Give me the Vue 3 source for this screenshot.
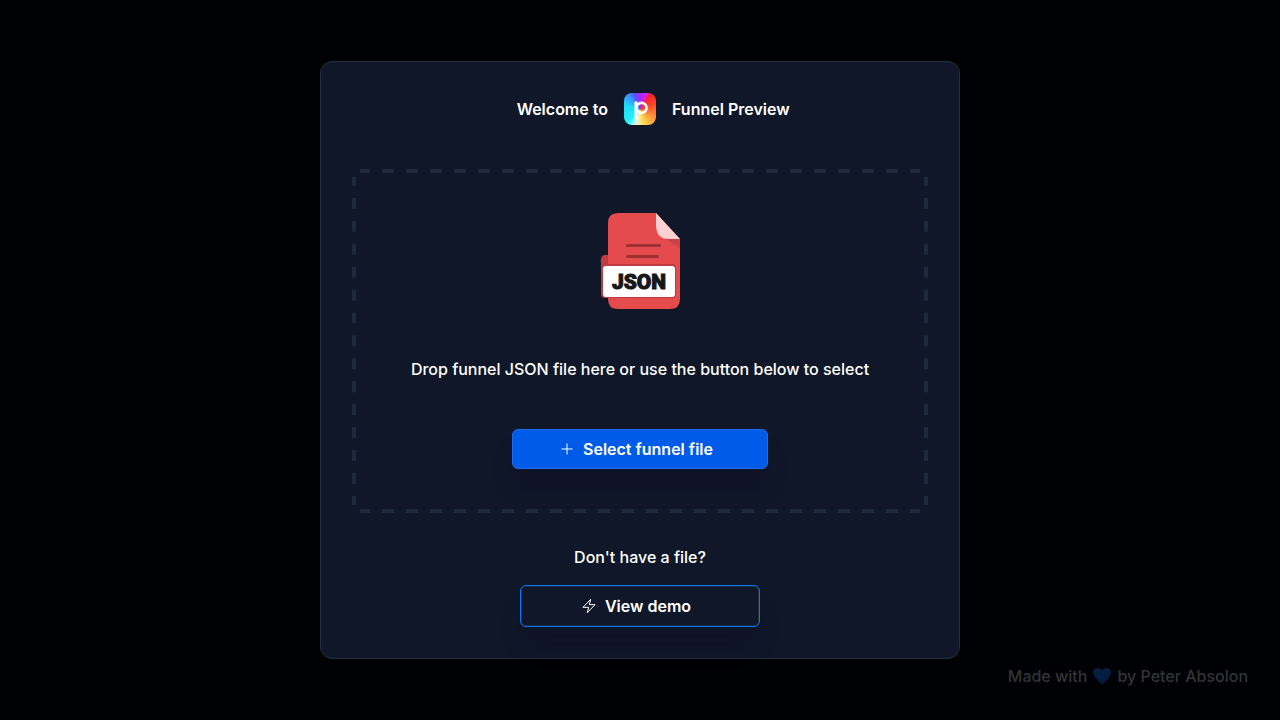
<script setup>
const headingLeft = 'Welcome to'
const headingRight = 'Funnel Preview'
</script>

<template>
  <div class="page">
    <main class="card">
      <header class="heading">
        <span class="left">{{ headingLeft }}</span>
        <span class="logo">
          <svg viewBox="0 0 32 32" aria-hidden="true">
            <path d="M12 8.500v18" fill="none" stroke="#fff" stroke-width="3" />
            <circle cx="17.500" cy="14.800" r="5" fill="none" stroke="#fff" stroke-width="2.800" />
          </svg>
        </span>
        <span>{{ headingRight }}</span>
      </header>

      <section class="drop">
        <svg class="file" viewBox="4 0 96 96" aria-hidden="true">
          <path d="M17 42h9v43h-5q-8 0-8-8V50q-1-8 4-8Z" fill="#bd3c3f" />
          <path d="M30 0h38l24 26v60q0 10-10 10H30q-10 0-10-10V10Q20 0 30 0Z" fill="#e54b4d" />
          <path d="M78 26h14v9Z" fill="#cb4144" />
          <path d="M68 0l24 26H81Q68 26 68 12Z" fill="#ffcfd2" />
          <path d="M39.500 32.500h32M39.500 43.500h30" stroke="#9c3033" stroke-width="3" stroke-linecap="round" />
          <rect x="13" y="51" width="75" height="34" rx="4" fill="#bd3c3f" />
          <rect x="15" y="53" width="72" height="31" rx="3" fill="#fff" />
          <text x="51" y="75.500" text-anchor="middle">JSON</text>
        </svg>
        <p>Drop funnel JSON file here or use the button below to select</p>
        <button class="btn primary" type="button">
          <svg viewBox="0 0 16 16" aria-hidden="true"><path d="M8 2.500v11M2.500 8h11" /></svg>
          Select funnel file
        </button>
      </section>

      <section class="demo">
        <p>Don't have a file?</p>
        <button class="btn outline" type="button">
          <svg viewBox="0 0 24 24" aria-hidden="true"><path d="M14.500 2 3 14h8.500L9.500 22 21 10h-8.500Z" stroke-width="1.500" /></svg>
          View demo
        </button>
      </section>
    </main>

    <footer class="credit">
      Made with
      <svg viewBox="0 0 20 18" aria-label="love" role="img">
        <defs>
          <linearGradient id="heart" x1="0" y1="0" x2="0" y2="1">
            <stop offset="0" stop-color="#08203f" />
            <stop offset="1" stop-color="#001a42" />
          </linearGradient>
        </defs>
        <path d="M10 17.500C7 14.500 1 10 1 5.500 1 .5 7.500-.8 10 4c2.500-4.800 9-3.500 9 1.500 0 4.500-6 9-9 12Z" fill="url(#heart)" />
      </svg>
      by Peter Absolon
    </footer>
  </div>
</template>

<style>
body {
  background: #000104;
}
</style>

<style scoped>
.page {
  position: relative;
  display: flex;
  align-items: center;
  justify-content: center;
  min-height: 100vh;
  color: #fff;
  font: 500 16px/24px Inter, sans-serif;
}
.card {
  box-sizing: border-box;
  width: 50%;
  min-width: 560px;
  padding: 31px;
  border: 1px solid #242d3c;
  border-radius: 12px;
  background: #0f1729;
}
.heading {
  display: grid;
  grid-template-columns: 1fr 32px 1fr;
  align-items: center;
  gap: 16px;
  margin-bottom: 44px;
  font-weight: 600;
}
.left {
  text-align: right;
}
.logo {
  height: 32px;
  overflow: hidden;
  border-radius: 8px;
  background: conic-gradient(from 0deg at 50% 52%, #a52bfa, #d81ee8 24deg, #ff1f2c 32deg, #ff4a2a 70deg, #ff8a3c 115deg, #ffd24a 160deg, #fff0b0 190deg, #b8fbff 200deg, #22f0fa 225deg, #22d8fa 290deg, #3e8cff 325deg, #5a50ff 340deg, #a52bfa 360deg);
}
.logo svg {
  display: block;
}
.drop {
  display: flex;
  flex-direction: column;
  align-items: center;
  padding: 44px 32px;
  --c: linear-gradient(#0f1729, #0f1729);
  --x: linear-gradient(90deg, transparent 25%, #1e293b 25% 75%, transparent 75%);
  --y: linear-gradient(transparent 25%, #1e293b 25% 75%, transparent 75%);
  background:
    var(--c) left top / 8px 8px no-repeat,
    var(--c) right top / 8px 8px no-repeat,
    var(--c) left bottom / 8px 8px no-repeat,
    var(--c) right bottom / 8px 8px no-repeat,
    var(--x) left top / 24px 4px round no-repeat,
    var(--x) left bottom / 24px 4px round no-repeat,
    var(--y) left top / 4px 23px no-repeat round,
    var(--y) right top / 4px 23px no-repeat round;
}
.file {
  width: 96px;
  height: 96px;
}
.file text {
  fill: #171717;
  stroke: #171717;
  stroke-width: 1px;
  font: 900 21px Roboto, sans-serif;
}
p {
  margin: 0;
}
.drop p {
  margin: 48px 0;
}
.btn {
  display: flex;
  align-items: center;
  justify-content: center;
  gap: 8px;
  height: 40px;
  padding: 0 14px 0 6px;
  border: 1px solid #1a6cec;
  border-radius: 6px;
  color: #fff;
  font: 600 16px/24px Inter, sans-serif;
  box-shadow: 0 20px 25px -5px #120a1e38;
}
.btn svg {
  width: 16px;
  height: 16px;
  fill: none;
  stroke: currentColor;
  stroke-width: 1;
  stroke-linejoin: round;
}
.primary {
  width: 256px;
  background: #005ce8;
}
.demo {
  display: flex;
  flex-direction: column;
  align-items: center;
  gap: 16px;
  margin-top: 32px;
}
.outline {
  width: 240px;
  height: 42px;
  border-color: #0878f5;
  background: #0f1729;
  box-shadow: inset 0 0 0 1px #1e293b, 0 20px 25px -5px #120a1e38;
}
.credit {
  position: absolute;
  right: 32px;
  bottom: 32px;
  display: flex;
  align-items: center;
  gap: 5px;
  color: #333436;
}
.credit svg {
  width: 20px;
  height: 18px;
}
</style>
